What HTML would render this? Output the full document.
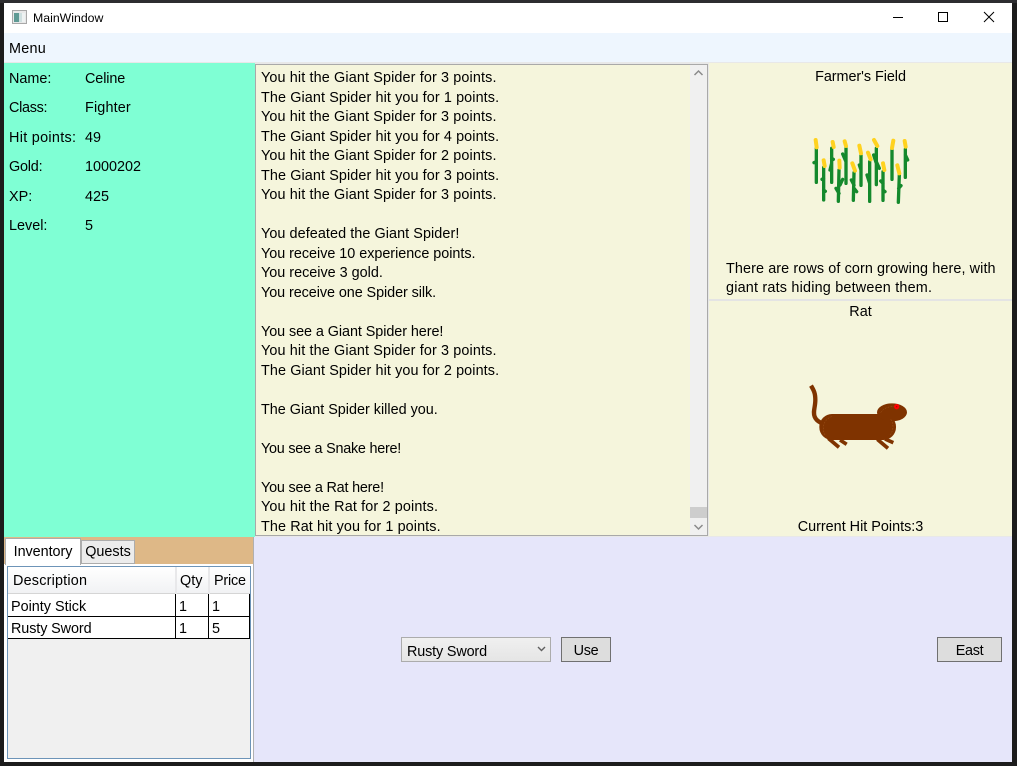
<!DOCTYPE html>
<html>
<head>
<meta charset="utf-8">
<style>
html,body{margin:0;padding:0;width:1017px;height:766px;overflow:hidden;background:#1c1c1c;}
body{font-family:"Liberation Sans",sans-serif;font-size:14.4px;color:#000;position:relative;}
div{position:absolute;box-sizing:border-box;}
.t{white-space:nowrap;line-height:20px;height:20px;}
.c{text-align:center;}
.l{display:block;height:19.53px;}
</style>
</head>
<body>
<div style="left:0;top:0;width:1017px;height:3px;background:#2d2d30"></div>
<div style="left:4px;top:3px;width:1008px;height:30px;background:#fff"></div>
<svg style="position:absolute;left:12px;top:10px" width="15" height="14" viewBox="0 0 15 14"><rect x=".5" y=".5" width="14" height="13" fill="#e8e8e8" stroke="#a8a8a8"/><rect x="2" y="3" width="5" height="9" fill="#5f9a94"/><rect x="7" y="3" width="3" height="9" fill="#cfe0e0"/><rect x="10" y="3" width="3" height="9" fill="#eef2f2"/></svg>
<div class="t" style="left:33px;top:8px;font-size:12.3px;">MainWindow</div>
<svg style="position:absolute;left:890px;top:8px" width="110" height="20" viewBox="0 0 110 20" fill="none" stroke="#000" stroke-width="1"><path d="M3 9.500H13"/><rect x="48.500" y="4.500" width="9" height="9"/><path d="M94 4L104 14M104 4L94 14"/></svg>

<div style="left:4px;top:33px;width:1008px;height:29px;background:#eef6fe"></div>
<div class="t" style="left:9px;top:39px;letter-spacing:.25px;">Menu</div>
<div style="left:4px;top:62px;width:1008px;height:475px;background:#e8e8e8"></div>

<div style="left:4px;top:63px;width:251px;height:474px;background:#7fffd4"></div>
<div class="t" style="left:9px;top:68.500px">Name:</div><div class="t" style="left:85px;top:68.500px;letter-spacing:-.1px">Celine</div>
<div class="t" style="left:9px;top:98px;letter-spacing:-.3px">Class:</div><div class="t" style="left:85px;top:98px;letter-spacing:.15px">Fighter</div>
<div class="t" style="left:9px;top:127.500px;letter-spacing:.3px">Hit points:</div><div class="t" style="left:85px;top:127.500px">49</div>
<div class="t" style="left:9px;top:157px;letter-spacing:-.2px">Gold:</div><div class="t" style="left:85px;top:157px">1000202</div>
<div class="t" style="left:9px;top:186.500px">XP:</div><div class="t" style="left:85px;top:186.500px">425</div>
<div class="t" style="left:9px;top:216px">Level:</div><div class="t" style="left:85px;top:216px">5</div>

<div style="left:255px;top:64px;width:453px;height:472px;background:#f5f5dc;border:1px solid #a9a9a9;overflow:hidden">
<div style="left:5px;top:4px;width:430px;white-space:nowrap;line-height:19.53px;">
<span class="l" style="letter-spacing:.13px">You hit the Giant Spider for 3 points.</span>
<span class="l" style="letter-spacing:.1px">The Giant Spider hit you for 1 points.</span>
<span class="l" style="letter-spacing:.13px">You hit the Giant Spider for 3 points.</span>
<span class="l" style="letter-spacing:.1px">The Giant Spider hit you for 4 points.</span>
<span class="l" style="letter-spacing:.13px">You hit the Giant Spider for 2 points.</span>
<span class="l" style="letter-spacing:.1px">The Giant Spider hit you for 3 points.</span>
<span class="l" style="letter-spacing:.13px">You hit the Giant Spider for 3 points.</span>
<span class="l"></span>
<span class="l" style="letter-spacing:.07px">You defeated the Giant Spider!</span>
<span class="l" style="letter-spacing:-.03px">You receive 10 experience points.</span>
<span class="l">You receive 3 gold.</span>
<span class="l" style="letter-spacing:-.07px">You receive one Spider silk.</span>
<span class="l"></span>
<span class="l" style="letter-spacing:-.07px">You see a Giant Spider here!</span>
<span class="l" style="letter-spacing:.13px">You hit the Giant Spider for 3 points.</span>
<span class="l" style="letter-spacing:.1px">The Giant Spider hit you for 2 points.</span>
<span class="l"></span>
<span class="l">The Giant Spider killed you.</span>
<span class="l"></span>
<span class="l" style="letter-spacing:-.24px">You see a Snake here!</span>
<span class="l"></span>
<span class="l" style="letter-spacing:-.2px">You see a Rat here!</span>
<span class="l" style="letter-spacing:.14px">You hit the Rat for 2 points.</span>
<span class="l" style="letter-spacing:.1px">The Rat hit you for 1 points.</span>
</div>
<div style="left:434px;top:0;width:17px;height:470px;background:#f0f0f0"></div>
<div style="left:434px;top:442px;width:17px;height:11px;background:#cdcdcd"></div>
<svg style="position:absolute;left:434px;top:0" width="17" height="470" fill="none" stroke="#8a8a8a" stroke-width="1.5"><path d="M4.500 10L8.500 6L12.500 10"/><path d="M4.500 460L8.500 464L12.500 460"/></svg>
</div>

<div style="left:709px;top:63px;width:303px;height:236px;background:#f5f5dc"></div>
<div class="t c" style="left:709px;top:67px;width:303px;letter-spacing:-.05px">Farmer's Field</div>
<svg style="position:absolute;left:790px;top:120px" width="140" height="100" viewBox="0 0 420 300" fill="none" stroke-linecap="round">
<g stroke="#14892c" stroke-width="10">
<path d="M79 85V187M79 125L72 128"/><path d="M101 142V240M101 175L96 178M101 210L106 214"/><path d="M125 85V187M125 130L120 150M125 115L130 118"/><path d="M147 150L145 244M147 220L138 205M150 195L158 178"/><path d="M168 85V190M168 125L158 102"/><path d="M192 158L190 241M192 195L184 180M192 205L200 215"/><path d="M213 105V196M213 150L208 135"/><path d="M239 125V244M239 190L231 165"/><path d="M259 85V194M259 130L251 105M259 125L268 145"/><path d="M279 155V241M279 190L272 183M279 210L285 215"/><path d="M306 90V178"/><path d="M328 165L325 247M326 205L333 197"/><path d="M346 88V172M346 105L353 120"/>
</g>
<g stroke="#ffd21f" stroke-width="12">
<path d="M77 60L80 82"/><path d="M101 121L104 138"/><path d="M128 66L131 81"/><path d="M148 122L149 143"/><path d="M164 64L168 78"/><path d="M187 130L195 152"/><path d="M208 77L213 100"/><path d="M234 98L242 118"/><path d="M252 60L262 78"/><path d="M279 130L283 150"/><path d="M310 62L306 84"/><path d="M322 136L328 160"/><path d="M344 63L347 80"/>
</g>
</svg>
<div class="t" style="left:726px;top:258.500px;letter-spacing:.1px">There are rows of corn growing here, with</div>
<div class="t" style="left:726px;top:277.500px;letter-spacing:.2px">giant rats hiding between them.</div>
<div style="left:709px;top:299px;width:303px;height:2px;background:#e4e4e4"></div>

<div style="left:709px;top:301px;width:303px;height:235px;background:#f5f5dc"></div>
<div class="t c" style="left:709px;top:302px;width:303px">Rat</div>
<svg style="position:absolute;left:790px;top:370px" width="140" height="90" viewBox="0 0 420 270" fill="none">
<g stroke="#7f3300">
<path d="M63 47C72 62 76 70 76 90C76 112 68 125 74 140C78 150 84 154 92 158" stroke-width="13"/>
<path d="M115 205L147 232M150 210L170 223M262 208L294 235M285 207L310 218" stroke-width="11"/>
</g>
<rect x="88" y="132" width="230" height="78" rx="38" fill="#7f3300"/>
<ellipse cx="306" cy="127" rx="45" ry="27" fill="#7f3300"/>
<path d="M105 195C95 175 100 148 125 140M300 195C312 180 312 160 300 145M272 128C282 112 300 108 318 110" stroke="#a0561f" stroke-width="1.500" stroke-dasharray="5 4"/>
<circle cx="320" cy="110" r="8" fill="#ff0000"/><circle cx="320" cy="110" r="2" fill="#a00"/>
</svg>
<div class="t c" style="left:709px;top:517px;width:303px">Current Hit Points:3</div>

<div style="left:254px;top:537px;width:758px;height:225px;background:#e6e6fa"></div>
<div style="left:4px;top:537px;width:250px;height:225px;background:#fff"></div>
<div style="left:4px;top:537px;width:250px;height:27px;background:#deb887"></div>
<div style="left:253px;top:537px;width:1px;height:225px;background:#b0b0b0"></div>
<div class="t c" style="left:5px;top:538px;width:76px;height:27px;background:#fff;border:1px solid #acacac;border-bottom:0;line-height:26px;letter-spacing:-.05px">Inventory</div>
<div class="t c" style="left:81px;top:540px;width:54px;height:24px;background:#ececec;border:1px solid #acacac;line-height:23px;">Quests</div>

<div style="left:7px;top:566px;width:244px;height:193px;background:#f0f0f0;border:1px solid #6d94b8"></div>
<div style="left:8px;top:567px;width:242px;height:27px;background:linear-gradient(#fff,#f1f2f4);border-bottom:1px solid #d5d5d5"></div>
<div style="left:175px;top:567px;width:2px;height:27px;background:#e8e8ea"></div>
<div style="left:208px;top:567px;width:2px;height:27px;background:#e8e8ea"></div>
<div class="t" style="left:13px;top:571px;letter-spacing:.2px">Description</div>
<div class="t" style="left:180px;top:571px">Qty</div>
<div class="t" style="left:214px;top:571px;letter-spacing:-.2px">Price</div>

<div style="left:8px;top:594px;width:242px;height:45px;background:#fff;border-bottom:1px solid #000"></div>
<div style="left:8px;top:616px;width:242px;height:1px;background:#000"></div>
<div style="left:175px;top:594px;width:1px;height:45px;background:#000"></div>
<div style="left:208px;top:594px;width:1px;height:45px;background:#000"></div>
<div style="left:249px;top:594px;width:1px;height:45px;background:#000"></div>
<div class="t" style="left:11px;top:596.500px">Pointy Stick</div><div class="t" style="left:179px;top:596.500px">1</div><div class="t" style="left:212px;top:596.500px">1</div>
<div class="t" style="left:11px;top:618.500px;letter-spacing:-.1px">Rusty Sword</div><div class="t" style="left:179px;top:618.500px">1</div><div class="t" style="left:212px;top:618.500px">5</div>

<div style="left:401px;top:637px;width:150px;height:25px;background:linear-gradient(#f0f0f0,#e5e5e5);border:1px solid #acacac"></div>
<div class="t" style="left:407px;top:641.500px;letter-spacing:-.15px">Rusty Sword</div>
<svg style="position:absolute;left:537px;top:646px" width="10" height="6" fill="none" stroke="#606060" stroke-width="1.4"><path d="M1 1L4.500 4.500L8 1"/></svg>
<div class="t c" style="left:561px;top:637px;width:50px;height:25px;background:#dddddd;border:1px solid #707070;line-height:26px;letter-spacing:-.3px">Use</div>
<div class="t c" style="left:937px;top:637px;width:65px;height:25px;background:#dddddd;border:1px solid #707070;line-height:26px;letter-spacing:-.3px">East</div>
</body>
</html>
